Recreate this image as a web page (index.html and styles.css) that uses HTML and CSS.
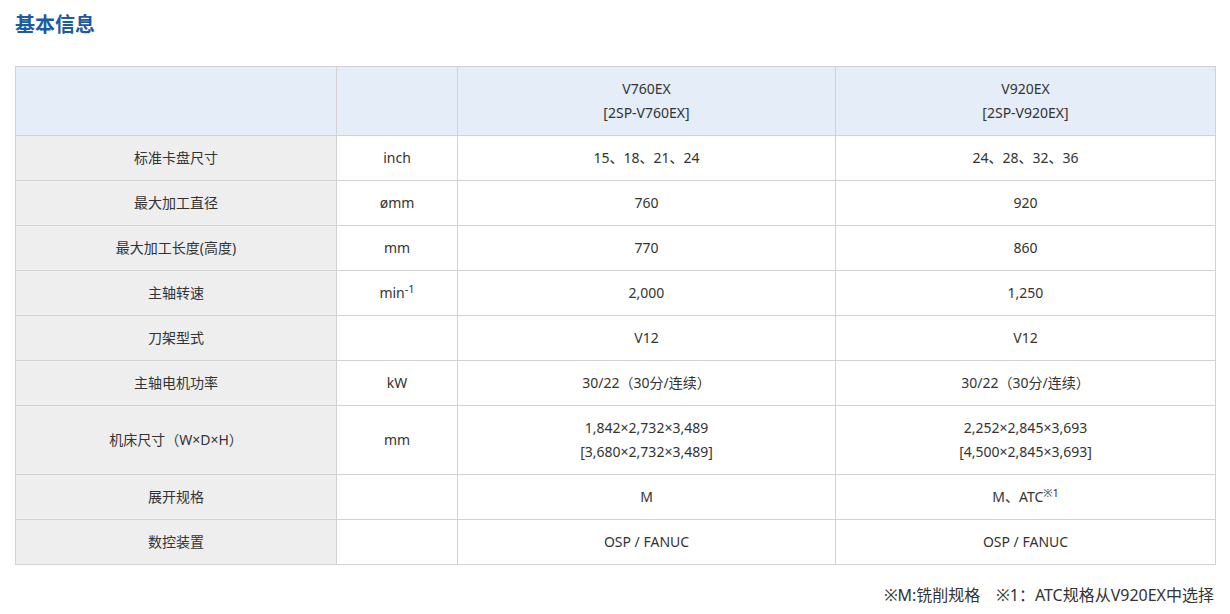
FILE: index.html
```html
<!DOCTYPE html>
<html lang="zh">
<head>
<meta charset="utf-8">
<link rel="stylesheet" href="styles.css">
</head>
<body>
<div class="page">
  <h2 class="title">基本信息</h2>
  <table class="spec">
    <colgroup>
      <col class="c1"><col class="c2"><col class="c3"><col class="c4">
    </colgroup>
    <thead>
      <tr class="head">
        <th></th><th></th>
        <th>V760EX<br>[2SP-V760EX]</th>
        <th>V920EX<br>[2SP-V920EX]</th>
      </tr>
    </thead>
    <tbody>
      <tr><td class="lab">标准卡盘尺寸</td><td>inch</td><td>15、18、21、24</td><td>24、28、32、36</td></tr>
      <tr><td class="lab">最大加工直径</td><td>ømm</td><td>760</td><td>920</td></tr>
      <tr><td class="lab">最大加工长度(高度)</td><td>mm</td><td>770</td><td>860</td></tr>
      <tr><td class="lab">主轴转速</td><td>min<sup>-1</sup></td><td>2,000</td><td>1,250</td></tr>
      <tr><td class="lab">刀架型式</td><td></td><td>V12</td><td>V12</td></tr>
      <tr><td class="lab">主轴电机功率</td><td>kW</td><td>30/22（30分/连续）</td><td>30/22（30分/连续）</td></tr>
      <tr class="tall"><td class="lab">机床尺寸（W×D×H）</td><td>mm</td><td>1,842×2,732×3,489<br>[3,680×2,732×3,489]</td><td>2,252×2,845×3,693<br>[4,500×2,845×3,693]</td></tr>
      <tr><td class="lab">展开规格</td><td></td><td>M</td><td>M、ATC<sup>※1</sup></td></tr>
      <tr><td class="lab">数控装置</td><td></td><td>OSP / FANUC</td><td>OSP / FANUC</td></tr>
    </tbody>
  </table>
  <p class="note">※M:铣削规格　※1：ATC规格从V920EX中选择</p>
</div>
</body>
</html>
```
FILE: styles.css
```css
html, body {
  margin: 0;
  padding: 0;
  background: #fff;
}
body {
  font-family: "Noto Sans", "Noto Sans CJK SC", sans-serif;
  color: #333;
}
.page {
  padding: 10px 16px 0 15px;
}
.title {
  margin: 0 0 28px 0;
  font-family: "Noto Sans CJK SC", sans-serif;
  font-size: 20px;
  line-height: 28px;
  font-weight: 700;
  color: #1b5aa6;
}
.spec {
  width: 1200px;
  border-collapse: collapse;
  table-layout: fixed;
  font-size: 14px;
}
.c1 { width: 321px; }
.c2 { width: 121px; }
.c3 { width: 378px; }
.c4 { width: 380px; }
.spec th, .spec td {
  border: 1px solid #d2d2d2;
  text-align: center;
  vertical-align: middle;
  padding: 0;
  height: 44px;
  font-weight: 400;
  line-height: 24px;
}
.spec .head th {
  background: #e4edf8;
  height: 68px;
}
.spec .tall td {
  height: 68px;
}
.spec td.lab {
  background: #eeeeee;
}
.spec sup {
  font-size: 11px;
  line-height: 0;
  vertical-align: 5px;
}
.note {
  margin: 18px 0 0 0;
  text-align: right;
  font-size: 16px;
  line-height: 24px;
  color: #333;
}
```
